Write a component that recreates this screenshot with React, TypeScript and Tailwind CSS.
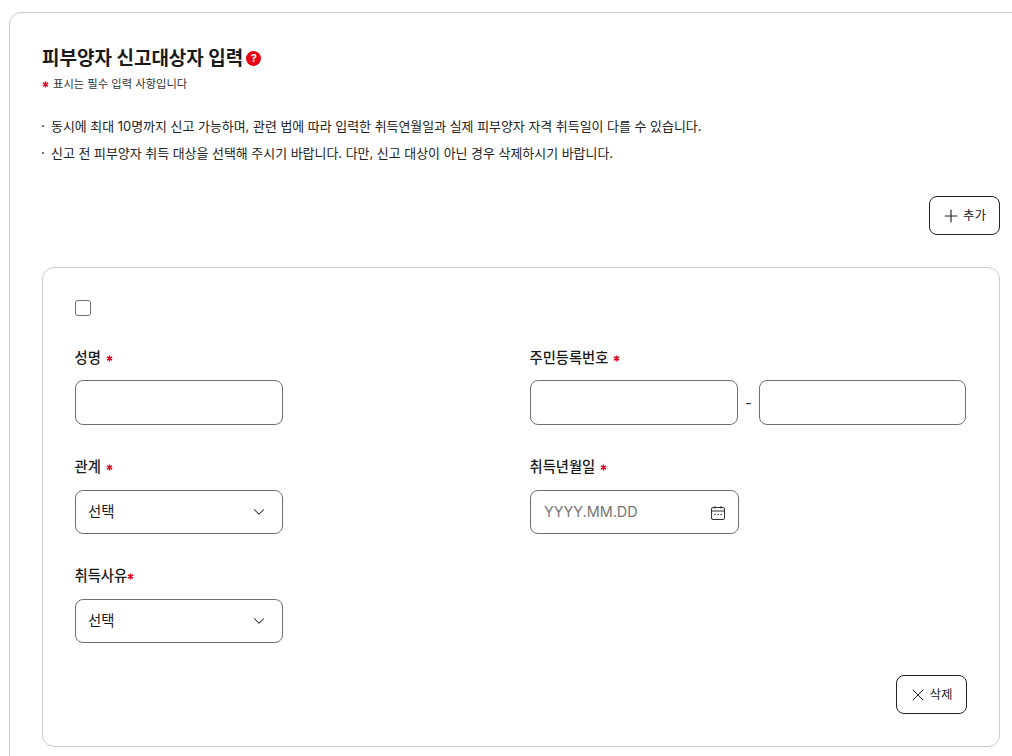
import React from "react";
import { Plus, X, ChevronDown } from "lucide-react";

const Star = () => (
  <svg width="7" height="7" viewBox="0 0 8 8" className="inline-block shrink-0">
    <path d="M4 0.5V7.5M1 2.2L7 5.8M7 2.2L1 5.8" stroke="#d9001b" strokeWidth="1.6" fill="none" />
  </svg>
);

const Label = ({ text, gap = true }: { text: string; gap?: boolean }) => (
  <div className={`flex items-center h-[20px] text-[14.3px] leading-[20px] font-medium text-[#1a1a1a] -ml-[0.5px] ${gap ? "gap-[5px]" : "gap-0"}`}>
    <span>{text}</span>
    <Star />
  </div>
);

const Select = () => (
  <div className="mt-[13px] flex items-center justify-between w-[208px] h-[44px] rounded-[8px] border border-[#6f6f6f] pl-[12px] pr-[14px] bg-white text-[14.4px] text-[#1a1a1a]">
    <span>선택</span>
    <ChevronDown size={18} strokeWidth={1.4} className="text-[#222]" />
  </div>
);

const Input = ({ w }: { w: string }) => <div className={`h-[45px] rounded-[8px] border border-[#6f6f6f] bg-white ${w}`} />;

export default function App() {
  return (
    <div className="w-[1012px] h-[756px] overflow-hidden bg-white" style={{ fontFamily: 'Inter, "Noto Sans CJK KR", sans-serif' }}>
      <div className="ml-[9px] mt-[12px] w-[1040px] h-[800px] border border-[#cccccc] pl-[32px] pt-[33px] rounded-[12px]">
        <div className="flex items-center h-[26px] text-[19px] leading-[26px] font-bold text-[#1a1a1a]">
          <span>피부양자 신고대상자 입력</span>
          <span className="ml-[3px] -mt-[2px] w-[15px] h-[15px] rounded-full bg-[#e60012] text-white text-[11px] leading-[15px] font-bold text-center">?</span>
        </div>
        <div className="flex items-center gap-[4px] mt-[3px] h-[18px] text-[11.3px] leading-[18px] text-[#333]">
          <Star />
          <span className="-mt-[1px]">표시는 필수 입력 사항입니다</span>
        </div>
        <div className="mt-[20px] w-[958px] text-[12.94px] leading-[27px] text-[#222]">
          <div className="flex items-center gap-[7px]">
            <span className="w-[2px] h-[2px] -mt-[2px] rounded-full bg-[#444]" />
            <span>동시에 최대 10명까지 신고 가능하며, 관련 법에 따라 입력한 취득연월일과 실제 피부양자 자격 취득일이 다를 수 있습니다.</span>
          </div>
          <div className="flex items-center gap-[7px]">
            <span className="w-[2px] h-[2px] -mt-[2px] rounded-full bg-[#444]" />
            <span>신고 전 피부양자 취득 대상을 선택해 주시기 바랍니다. 다만, 신고 대상이 아닌 경우 삭제하시기 바랍니다.</span>
          </div>
        </div>
        <div className="w-[958px] flex justify-end mt-[29px]">
          <div className="flex items-center justify-center gap-[2px] w-[71px] h-[39px] rounded-[8px] border border-[#222] text-[12.5px] text-[#222]">
            <Plus size={20} strokeWidth={1.4} className="-ml-[2px] text-[#222]" />
            <span className="mt-[1px]">추가</span>
          </div>
        </div>
        <div className="mt-[32px] w-[958px] h-[480px] rounded-[12px] border border-[#cccccc] pl-[32px] pr-[32px] pt-[32px] flex flex-col">
          <div className="w-[16px] h-[16px] rounded-[3px] border border-[#6f6f6f]" />
          <div className="grid grid-cols-[455px_1fr] mt-[32px]">
            <div className="h-[109px]">
              <Label text="성명" />
              <div className="mt-[12px]"><Input w="w-[208px]" /></div>
            </div>
            <div className="h-[109px]">
              <Label text="주민등록번호" />
              <div className="mt-[12px] flex items-center">
                <Input w="w-[208px]" />
                <span className="w-[21px] text-center text-[14px] text-[#222]">-</span>
                <Input w="w-[207px]" />
              </div>
            </div>
            <div className="h-[109px]">
              <Label text="관계" />
              <Select />
            </div>
            <div className="h-[109px]">
              <Label text="취득년월일" />
              <div className="mt-[13px] flex items-center justify-between w-[209px] h-[44px] rounded-[8px] border border-[#6f6f6f] pl-[13px] pr-[13px] text-[14.4px] text-[#767676]">
                <span>YYYY.MM.DD</span>
                <svg width="14" height="14" viewBox="0 0 14 14" fill="none" stroke="#333" strokeWidth="1" className="mt-[2px]">
                  <rect x="0.5" y="1.5" width="13" height="12" rx="1.5" />
                  <path d="M0.5 5H13.5M4 0V2.5M10 0V2.5" />
                  <path d="M3.2 8.5h1.4M6.3 8.5h1.4M9.4 8.5h1.4" strokeWidth="1.2" />
                </svg>
              </div>
            </div>
            <div>
              <Label text="취득사유" gap={false} />
              <Select />
            </div>
          </div>
          <div className="flex justify-end mt-[32px]">
            <div className="flex items-center justify-center gap-[1px] w-[71px] h-[39px] rounded-[8px] border border-[#222] text-[12.5px] text-[#222]">
              <X size={20} strokeWidth={1.2} className="-ml-[2px]" />
              <span className="mt-[1px]">삭제</span>
            </div>
          </div>
        </div>
      </div>
    </div>
  );
}
